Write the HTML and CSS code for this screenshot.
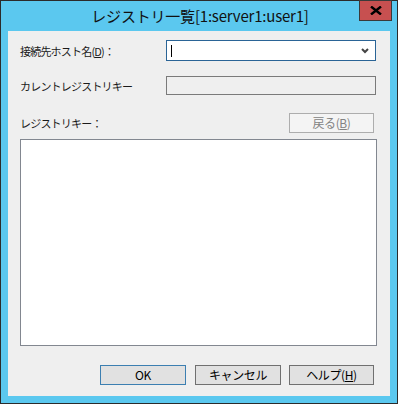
FILE: index.html
```
<!DOCTYPE html>
<html lang="ja">
<head>
    <meta charset="UTF-8">
    <title>レジストリ一覧</title>
    <link rel="stylesheet" href="styles.css">
</head>
<body>
    <div class="window">
        <div class="titlebar">
            <span class="title">レジストリ一覧[1:server1:user1]</span>
            <div class="close">
                <svg width="12" height="9" viewBox="0 0 12 9"><path d="M1 0.5 L11 8.5 M11 0.5 L1 8.5" stroke="#000" stroke-width="2.4"/></svg>
            </div>
        </div>

        <div class="client">
            <div class="row">
                <label class="label">接続先ホスト名(<u>D</u>)：</label>
                <div class="combo">
                    <span class="caret"></span>
                    <svg class="arrow" width="8" height="6" viewBox="0 0 8 6"><path d="M1 1 L4 4 L7 1" fill="none" stroke="#444" stroke-width="2"/></svg>
                </div>
            </div>

            <div class="row row-current">
                <label class="label">カレントレジストリキー</label>
                <div class="field"></div>
            </div>

            <div class="row row-key">
                <label class="label">レジストリキー：</label>
                <button class="btn btn-back" disabled>戻る(<u>B</u>)</button>
            </div>

            <div class="listbox"></div>

            <div class="footer">
                <button class="btn btn-ok">OK</button>
                <button class="btn">キャンセル</button>
                <button class="btn">ヘルプ(<u>H</u>)</button>
            </div>
        </div>
    </div>
</body>
</html>
```

FILE: styles.css
```
body {
    margin: 0;
    font-family: "Noto Sans CJK JP", "Liberation Sans", sans-serif;
    font-size: 12px;
    color: #000;
}
.window {
    width: 398px;
    height: 404px;
    box-sizing: border-box;
    border: 1px solid #2b2b2b;
    background-color: #5bc8ef;
    padding: 0 7px 7px 7px;
}
.titlebar {
    height: 30px;
    position: relative;
    text-align: center;
}
.title {
    display: inline-block;
    font-family: "Noto Sans CJK JP", sans-serif;
    font-size: 15px;
    line-height: 30px;
    margin-left: 2px;
    letter-spacing: -0.2px;
    color: #111;
}
.close {
    position: absolute;
    top: -1px;
    right: -2px;
    width: 33px;
    height: 21px;
    box-sizing: border-box;
    border: 1px solid #3a3a3a;
    background-color: #c75050;
    display: flex;
    align-items: center;
    justify-content: center;
}
.client {
    height: 365px;
    box-sizing: border-box;
    background-color: #efefef;
    padding: 9px 0 0 12px;
}
.row {
    display: flex;
    align-items: center;
}
.label {
    width: 146px;
    font-size: 11px;
    letter-spacing: -0.8px;
    line-height: 16px;
    color: #1a1a1a;
}
.combo {
    width: 210px;
    height: 21px;
    box-sizing: border-box;
    border: 1px solid #2a6496;
    background-color: #fff;
    display: flex;
    align-items: center;
    justify-content: space-between;
    padding: 0 6px 0 4px;
}
.caret {
    width: 1px;
    height: 12px;
    background-color: #000;
}
.row-current {
    margin-top: 15px;
}
.field {
    width: 210px;
    height: 19px;
    box-sizing: border-box;
    border: 1px solid #7a7a7a;
    background-color: #efefef;
}
.row-key {
    margin-top: 18px;
    justify-content: space-between;
    width: 354px;
}
.btn {
    width: 86px;
    height: 20px;
    box-sizing: border-box;
    border: 1px solid #707070;
    background-color: #e1e1e1;
    font-family: "Noto Sans CJK JP", sans-serif;
    font-size: 12px;
    letter-spacing: -0.4px;
    line-height: 16px;
    padding: 0;
    color: #000;
}
.btn-back {
    width: 85px;
    border-color: #adadad;
    background-color: #f4f4f4;
    color: #838383;
}
.btn-ok {
    border-color: #3c7fb1;
}
.listbox {
    margin-top: 6px;
    width: 357px;
    height: 207px;
    box-sizing: border-box;
    border: 1px solid #828790;
    background-color: #fff;
}
.footer {
    margin-top: 19px;
    display: flex;
    gap: 9px;
    padding-left: 80px;
}
.footer .btn:last-child {
    width: 85px;
    margin-left: -1px;
}
```
